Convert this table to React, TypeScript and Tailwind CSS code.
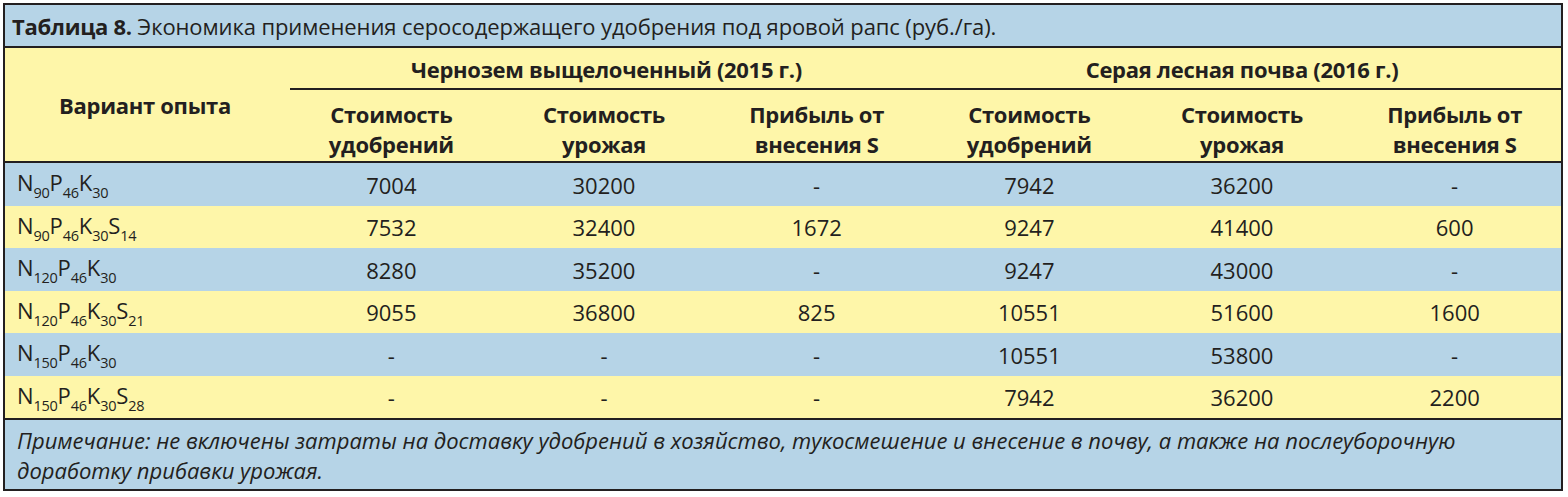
import React from "react";

const F = { fontFamily: '"Open Sans", "Noto Sans", sans-serif' };

function Formula({ parts }: { parts: [string, string][] }) {
  return (
    <span className="inline-flex items-baseline">
      {parts.map(([el, sub], i) => (
        <span key={i} className="inline-flex items-baseline">
          <span>{el}</span>
          <span className="text-[14.5px] relative top-[7px] tracking-[-0.3px]">{sub}</span>
        </span>
      ))}
    </span>
  );
}

const rows: { f: [string, string][]; v: string[] }[] = [
  { f: [["N", "90"], ["P", "46"], ["K", "30"]], v: ["7004", "30200", "-", "7942", "36200", "-"] },
  { f: [["N", "90"], ["P", "46"], ["K", "30"], ["S", "14"]], v: ["7532", "32400", "1672", "9247", "41400", "600"] },
  { f: [["N", "120"], ["P", "46"], ["K", "30"]], v: ["8280", "35200", "-", "9247", "43000", "-"] },
  { f: [["N", "120"], ["P", "46"], ["K", "30"], ["S", "21"]], v: ["9055", "36800", "825", "10551", "51600", "1600"] },
  { f: [["N", "150"], ["P", "46"], ["K", "30"]], v: ["-", "-", "-", "10551", "53800", "-"] },
  { f: [["N", "150"], ["P", "46"], ["K", "30"], ["S", "28"]], v: ["-", "-", "-", "7942", "36200", "2200"] },
];

const sub = [
  ["Стоимость", "удобрений"],
  ["Стоимость", "урожая"],
  ["Прибыль от", "внесения S"],
  ["Стоимость", "удобрений"],
  ["Стоимость", "урожая"],
  ["Прибыль от", "внесения S"],
];

export default function App() {
  return (
    <div className="w-[1568px] h-[497px] bg-white pt-[3px] pl-[3px]" style={F}>
      <div className="w-[1560px] border-2 border-[#231f20] text-[#231f20] text-[22px]">
        <div className="h-[43px] bg-[#b6d4e7] flex items-center pl-[7px] pt-[1px] border-b-2 border-[#231f20] tracking-[-0.1px]">
          <span className="font-bold tracking-[-0.3px]">Таблица 8.</span>
          <span>&nbsp;Экономика применения серосодержащего удобрения под яровой рапс (руб./га).</span>
        </div>
        <div className="bg-[#fef6a9] grid grid-cols-[280px_repeat(6,1fr)] border-b-2 border-[#231f20] h-[115px] font-bold tracking-[-0.3px]">
          <div className="row-span-2 flex items-center justify-center pt-[2px]">Вариант опыта</div>
          <div className="col-span-3 ml-[5px] h-[42px] border-b-2 border-[#231f20] flex items-center justify-center pt-[3px]">
            Чернозем выщелоченный (2015 г.)
          </div>
          <div className="col-span-3 h-[42px] border-b-2 border-[#231f20] flex items-center justify-center pt-[3px]">
            Серая лесная почва (2016 г.)
          </div>
          {sub.map((s, i) => (
            <div key={i} className="flex flex-col items-center justify-center leading-[30px] pt-[2px]">
              <span>{s[0]}</span>
              <span>{s[1]}</span>
            </div>
          ))}
        </div>
        {rows.map((r, i) => (
          <div
            key={i}
            className={`grid grid-cols-[280px_repeat(6,1fr)] h-[42.5px] items-center ${
              i % 2 === 0 ? "bg-[#b6d4e7]" : "bg-[#fef6a9]"
            }`}
          >
            <div className="pl-[12px] -mt-[3px]">
              <Formula parts={r.f} />
            </div>
            {r.v.map((v, j) => (
              <div key={j} className="text-center pt-[2px]">
                {v}
              </div>
            ))}
          </div>
        ))}
        <div className="bg-[#b6d4e7] border-t-2 border-[#231f20] h-[71px] pl-[12px] pt-[5px] italic leading-[30px]">
          Примечание: не включены затраты на доставку удобрений в хозяйство, тукосмешение и внесение в почву, а также на послеуборочную
          <br />
          доработку прибавки урожая.
        </div>
      </div>
    </div>
  );
}
